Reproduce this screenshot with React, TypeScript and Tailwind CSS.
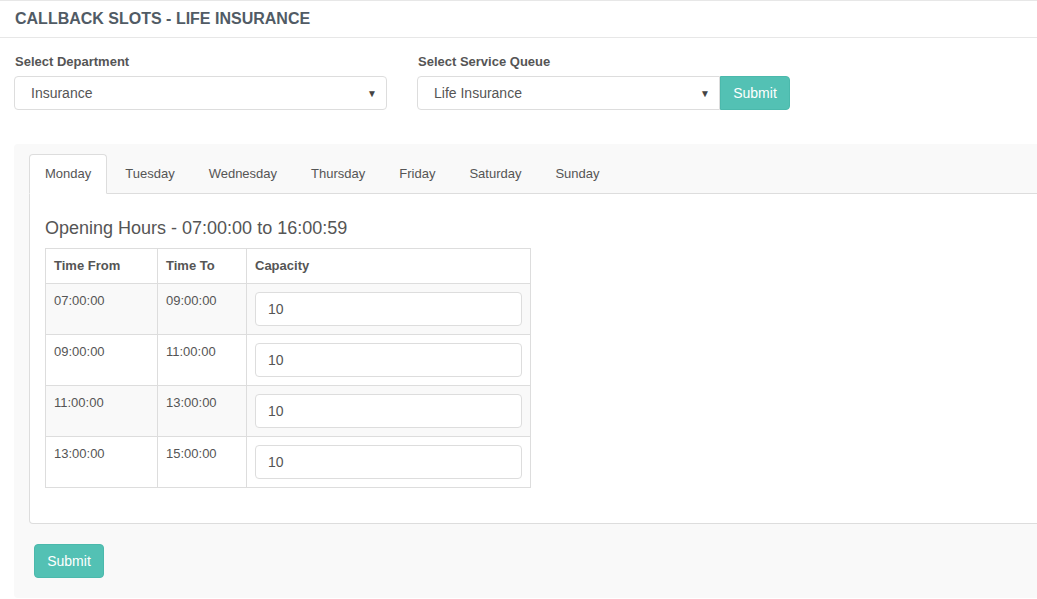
import { useState } from 'react';

const days = ['Monday', 'Tuesday', 'Wednesday', 'Thursday', 'Friday', 'Saturday', 'Sunday'];

const slots = [
  { from: '07:00:00', to: '09:00:00', capacity: '10' },
  { from: '09:00:00', to: '11:00:00', capacity: '10' },
  { from: '11:00:00', to: '13:00:00', capacity: '10' },
  { from: '13:00:00', to: '15:00:00', capacity: '10' },
];

function FakeSelect({ value, className }: { value: string; className: string }) {
  return (
    <div
      className={`flex h-[34px] items-center justify-between border border-[#ddd] bg-white pl-4 pr-[9px] text-[14px] text-[#555] ${className}`}
    >
      <span>{value}</span>
      <span className="text-[10px] text-[#444]">▼</span>
    </div>
  );
}

export default function App() {
  const [active, setActive] = useState('Monday');
  const [caps, setCaps] = useState(slots.map((s) => s.capacity));

  return (
    <div className="min-h-screen overflow-hidden bg-white font-['Liberation_Sans',Arial,sans-serif] text-[13px] text-[#555]">
      <div className="flex h-[38px] items-center border-t border-b border-[#e7e7e7] px-[15px]">
        <h1 className="text-[16px] font-bold text-[#515b65]">CALLBACK SLOTS - LIFE INSURANCE</h1>
      </div>

      <div className="flex gap-[30px] px-[14px] pt-[15px]">
        <div>
          <label className="mb-[5px] block pl-px text-[13px] font-bold leading-[18px] text-[#555]">
            Select Department
          </label>
          <FakeSelect value="Insurance" className="w-[373px] rounded-[4px]" />
        </div>
        <div>
          <label className="mb-[5px] block pl-px text-[13px] font-bold leading-[18px] text-[#555]">
            Select Service Queue
          </label>
          <div className="flex">
            <FakeSelect value="Life Insurance" className="w-[303px] rounded-l-[4px]" />
            <button className="h-[34px] w-[70px] rounded-r-[4px] border border-[#4bb9ac] bg-[#53c1b4] text-[14px] text-white">
              Submit
            </button>
          </div>
        </div>
      </div>

      <div className="mt-[34px] ml-[14px] -mr-[20px] rounded-[4px] bg-[#f9f9f9] pt-[10px] pb-[20px] pl-[15px] pr-[15px]">
        <ul className="flex border-b border-[#ddd]">
          {days.map((d) => (
            <li key={d} className="-mb-px mr-[2px]">
              <button
                onClick={() => setActive(d)}
                className={`block rounded-t-[4px] border px-[15px] py-[10px] text-[13px] leading-[18px] text-[#555] ${
                  active === d ? 'border-[#ddd] border-b-white bg-white' : 'border-transparent'
                }`}
              >
                {d}
              </button>
            </li>
          ))}
        </ul>

        <div className="rounded-b-[4px] border border-t-0 border-[#ddd] bg-white px-[15px] pt-[24px] pb-[35px]">
          <h4 className="mb-[10px] text-[18px] leading-[20px] text-[#555]">Opening Hours - 07:00:00 to 16:00:59</h4>
          <table className="w-[486px] border-collapse border border-[#ddd] text-[13px]">
            <thead>
              <tr className="h-[35px]">
                <th className="w-[112px] border border-[#ddd] px-2 text-left font-bold">Time From</th>
                <th className="w-[89px] border border-[#ddd] px-2 text-left font-bold">Time To</th>
                <th className="border border-[#ddd] px-2 text-left font-bold">Capacity</th>
              </tr>
            </thead>
            <tbody>
              {slots.map((s, i) => (
                <tr key={s.from} className={i % 2 === 0 ? 'bg-[#f9f9f9]' : 'bg-white'}>
                  <td className="border border-[#ddd] p-2 align-top leading-[18px]">{s.from}</td>
                  <td className="border border-[#ddd] p-2 align-top leading-[18px]">{s.to}</td>
                  <td className="border border-[#ddd] p-2 align-top">
                    <input
                      value={caps[i]}
                      onChange={(e) => {
                        const next = [...caps];
                        next[i] = e.target.value;
                        setCaps(next);
                      }}
                      className="block h-[34px] w-full rounded-[4px] border border-[#ddd] bg-white px-3 text-[14px] text-[#555] outline-none"
                    />
                  </td>
                </tr>
              ))}
            </tbody>
          </table>
        </div>

        <button className="mt-[20px] ml-[5px] h-[34px] w-[70px] rounded-[4px] border border-[#4bb9ac] bg-[#53c1b4] text-[14px] text-white">
          Submit
        </button>
      </div>
    </div>
  );
}
